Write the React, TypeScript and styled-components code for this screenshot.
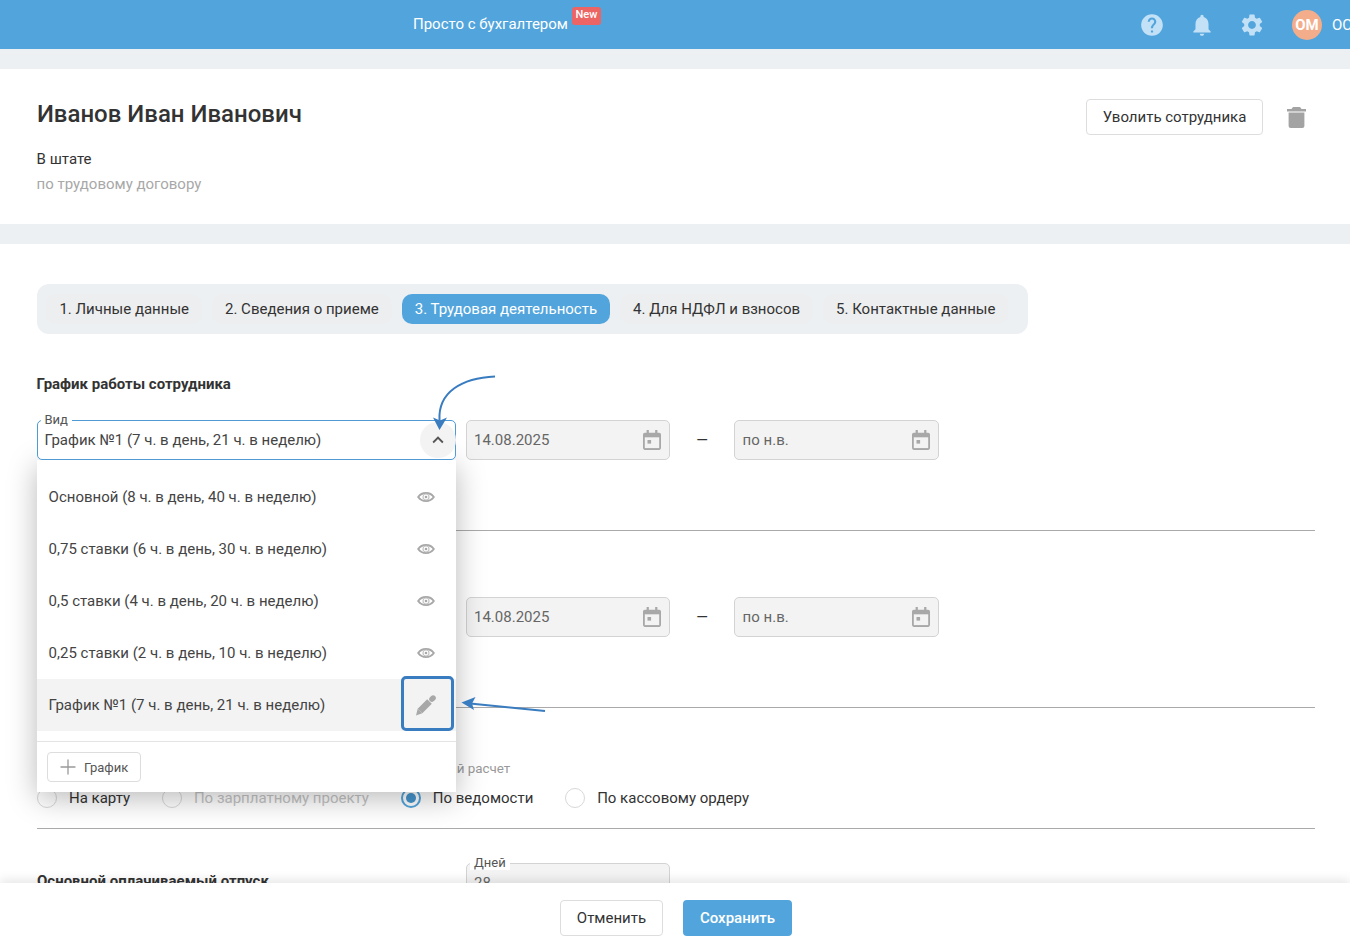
import styled, { createGlobalStyle } from 'styled-components';
import { MdHelp, MdKeyboardArrowUp, MdNotifications, MdSettings } from 'react-icons/md';
import { Plus } from 'lucide-react';

const GlobalStyle = createGlobalStyle`
  html, body {
    margin: 0;
    height: 100%;
    overflow: hidden;
    background: #fff;
    font-family: Roboto, "Noto Sans", sans-serif;
    font-size: 15px;
    color: #333;
  }
`;

const Header = styled.header`
  height: 49px;
  background: #52a5dc;
  display: flex;
  align-items: center;
  padding-left: 413px;
`;

const Product = styled.div`
  position: relative;
  margin-top: -2px;
  color: #fff;
  font-size: 15px;
`;

const NewBadge = styled.span`
  position: absolute;
  left: 159px;
  top: -8px;
  width: 29px;
  height: 18px;
  border-radius: 3px;
  background: #ec6464;
  color: #fff;
  font-size: 11px;
  font-weight: 500;
  line-height: 16px;
  text-align: center;
`;

const HeaderTools = styled.div`
  margin-left: auto;
  display: flex;
  align-items: center;
`;

const ToolIcon = styled.span`
  width: 50px;
  display: flex;
  justify-content: center;
  color: #c3e1f6;
  font-size: 26px;
`;

const Avatar = styled.div`
  width: 30px;
  height: 30px;
  margin-left: 15px;
  border-radius: 50%;
  background: #f4ad8a;
  color: #fff;
  font-size: 15px;
  font-weight: 700;
  line-height: 30px;
  text-align: center;
`;

const UserName = styled.div`
  width: 18px;
  margin-left: 10px;
  overflow: hidden;
  white-space: nowrap;
  color: #fff;
`;

const Band = styled.div`
  height: 20px;
  background: #ecf0f3;
`;

const EmployeeCard = styled.section`
  height: 155px;
  box-sizing: border-box;
  padding: 30px 44px 0 36.6px;
  display: flex;
  justify-content: space-between;
  align-items: flex-start;
`;

const EmployeeName = styled.h1`
  margin: 0 0 0 0.3px;
  font-size: 24px;
  font-weight: 500;
  line-height: 30px;
  color: #333;
`;

const EmployeeStatus = styled.div`
  margin-top: 20px;
  font-size: 15px;
  line-height: 20px;
`;

const EmployeeContract = styled.div`
  margin-top: 5px;
  font-size: 15px;
  line-height: 20px;
  color: #a8a8a8;
`;

const EmployeeActions = styled.div`
  display: flex;
  align-items: center;
  gap: 24px;
`;

const OutlineButton = styled.button<{ $width: number }>`
  width: ${(p) => p.$width}px;
  height: 36px;
  padding: 0;
  background: #fff;
  border: 1px solid #ddd;
  border-radius: 4px;
  color: #333;
  font: 15px Roboto, sans-serif;
`;

const Content = styled.main`
  padding: 40px 35px 0 37px;
`;

const Tabs = styled.nav`
  width: 991px;
  box-sizing: border-box;
  padding: 10px 0 10px 9.4px;
  display: flex;
  gap: 10px;
  background: #ecf0f3;
  border-radius: 12px;
`;

const Tab = styled.div<{ $active?: boolean }>`
  height: 30px;
  padding: 0 13px;
  border-radius: 10px;
  line-height: 30px;
  background: ${(p) => (p.$active ? '#52a5dc' : '#edeeef')};
  color: ${(p) => (p.$active ? '#fff' : '#333')};
`;

const SectionTitle = styled.h2`
  margin: 40px 0 26px -0.4px;
  font-size: 15px;
  font-weight: 700;
  line-height: 20px;
  color: #333;
`;

const FieldRow = styled.div<{ $top?: number }>`
  display: flex;
  align-items: center;
  margin-top: ${(p) => p.$top ?? 0}px;
`;

const SelectSlot = styled.div`
  position: relative;
  width: 419px;
  height: 40px;
  margin-right: 10px;
  flex: none;
`;

const SelectBox = styled.div`
  position: relative;
  z-index: 6;
  height: 100%;
  box-sizing: border-box;
  padding-left: 6.6px;
  display: flex;
  align-items: center;
  justify-content: space-between;
  background: #fff;
  border: 1px solid #4e9ad4;
  border-radius: 5px;
  color: #444;
`;

const FloatLabel = styled.span`
  position: absolute;
  z-index: 7;
  left: 3.5px;
  top: -7px;
  padding: 0 4px;
  background: #fff;
  color: #555;
  font-size: 13px;
  line-height: 14px;
`;

const ChevronButton = styled.span`
  width: 36px;
  height: 36px;
  margin-right: -1px;
  display: flex;
  align-items: center;
  justify-content: center;
  border-radius: 50%;
  background: #f3f3f3;
  color: #555;
  font-size: 22px;
`;

const DateField = styled.div<{ $width: number; $inset?: number }>`
  width: ${(p) => p.$width}px;
  height: 40px;
  box-sizing: border-box;
  padding: 0 8px 0 ${(p) => p.$inset ?? 7}px;
  display: flex;
  align-items: center;
  justify-content: space-between;
  flex: none;
  background: #f3f3f3;
  border: 1px solid #d3d3d3;
  border-radius: 5px;
  color: #666;
`;

const Dash = styled.div`
  width: 64px;
  margin-top: -1px;
  text-align: center;
  color: #333;
`;

const Dropdown = styled.div`
  position: absolute;
  z-index: 5;
  left: 0;
  top: 40px;
  width: 419px;
  height: 332px;
  box-sizing: border-box;
  padding-top: 11px;
  background: #fff;
  box-shadow: 0 6px 28px rgba(0, 0, 0, 0.28);
`;

const Option = styled.div<{ $selected?: boolean }>`
  height: 52px;
  padding: 0 ${(p) => (p.$selected ? 20 : 21)}px 0 11.6px;
  display: flex;
  align-items: center;
  justify-content: space-between;
  background: ${(p) => (p.$selected ? '#f3f3f3' : '#fff')};
  color: #444;
  font-size: 15px;
`;

const HighlightBox = styled.div`
  position: absolute;
  right: 2px;
  top: 216px;
  width: 53px;
  height: 55px;
  box-sizing: border-box;
  border: 3px solid #3a7cc0;
  border-radius: 5px;
`;

const DropdownFooter = styled.div`
  margin-top: 10px;
  padding: 10px;
  border-top: 1px solid #e3e3e3;
`;

const AddButton = styled.button`
  height: 30px;
  width: 94px;
  box-sizing: border-box;
  padding: 0 0 0 8px;
  display: flex;
  align-items: center;
  gap: 4px;
  background: #fff;
  border: 1px solid #ddd;
  border-radius: 4px;
  color: #555;
  font: 13px Roboto, sans-serif;
`;

const Divider = styled.hr<{ $top: number }>`
  height: 1px;
  margin: ${(p) => p.$top}px 0 0;
  border: 0;
  background: #aaa;
`;

const GroupLabel = styled.div`
  margin-top: 53px;
  padding-left: 3px;
  font-size: 13.4px;
  line-height: 16px;
  color: #999;
  white-space: nowrap;
`;

const RadioGroup = styled.div`
  margin-top: 11px;
  display: flex;
  gap: 31.85px;
`;

const RadioItem = styled.label<{ $disabled?: boolean }>`
  display: flex;
  align-items: center;
  gap: 12px;
  line-height: 20px;
  color: ${(p) => (p.$disabled ? '#c4c4c4' : '#333')};
`;

const RadioMark = styled.span<{ $checked?: boolean }>`
  width: 20px;
  height: 20px;
  box-sizing: border-box;
  display: flex;
  align-items: center;
  justify-content: center;
  border-radius: 50%;
  border: ${(p) => (p.$checked ? '2px solid #52a5dc' : '1px solid #d8d8d8')};

  &::after {
    content: '';
    width: 10px;
    height: 10px;
    border-radius: 50%;
    background: ${(p) => (p.$checked ? '#4596cf' : 'transparent')};
  }
`;

const VacationRow = styled.div`
  margin-top: 34px;
  display: flex;
  align-items: center;
`;

const VacationTitle = styled.div`
  width: 429px;
  flex: none;
  padding-bottom: 4px;
  font-size: 15px;
  font-weight: 700;
`;

const DaysField = styled(DateField)`
  position: relative;
`;

const DaysLabel = styled.span`
  position: absolute;
  left: 3px;
  top: -8px;
  padding: 0 4px;
  background: #fff;
  color: #555;
  font-size: 13px;
  line-height: 14px;
`;

const Footer = styled.footer`
  position: fixed;
  z-index: 10;
  left: 0;
  right: 0;
  bottom: 0;
  height: 58px;
  padding: 17px 0 0 2px;
  box-sizing: border-box;
  display: flex;
  justify-content: center;
  align-items: flex-start;
  gap: 20px;
  background: #fff;
  box-shadow: 0 -3px 10px rgba(0, 0, 0, 0.1);
`;

const PrimaryButton = styled.button`
  height: 36px;
  padding: 0 17px;
  background: #52a5dc;
  border: 0;
  border-radius: 4px;
  color: #fff;
  font: 500 15px Roboto, sans-serif;
`;

const Arrows = styled.svg`
  position: fixed;
  z-index: 20;
  left: 0;
  top: 0;
  overflow: visible;
`;

const CalendarIcon = () => (
  <svg width="18" height="20" viewBox="0 0 20 22" fill="none">
    <path d="M4 0h2.5v3h7V0H16v3h2a2 2 0 0 1 2 2v15a2 2 0 0 1-2 2H2a2 2 0 0 1-2-2V5a2 2 0 0 1 2-2h2z" fill="#a8a8a8" />
    <rect x="2" y="8" width="16" height="12" fill="#f3f3f3" />
    <rect x="5" y="11" width="4" height="4" fill="#a8a8a8" />
  </svg>
);

const TrashIcon = () => (
  <svg width="19" height="21" viewBox="0 0 19 21" fill="#a3a3a3">
    <path d="M6 0h7l1.5 2H19v2.6H0V2h4.5z" />
    <path d="M1.6 5.4h15.8V19a2 2 0 0 1-2 2H3.6a2 2 0 0 1-2-2z" />
  </svg>
);

const PencilIcon = () => (
  <svg width="24" height="24" viewBox="-1.5 -1 24 24" fill="none">
    <path d="M2.5 21.5l1.7-6.8 4.6 4.6z" fill="#a8a8a8" />
    <path d="M6.5 17L16 7.5" stroke="#a8a8a8" strokeWidth="6.5" />
    <path d="M18.4 5.2L19.6 4" stroke="#a8a8a8" strokeWidth="5.4" strokeLinecap="round" />
  </svg>
);

const EyeIcon = () => (
  <svg width="18" height="12" viewBox="0 0 18 12" fill="none">
    <path d="M1.2 6C4.8.6 13.2.6 16.8 6C13.2 11.4 4.8 11.4 1.2 6z" stroke="#a8a8a8" strokeWidth="1.9" />
    <circle cx="9" cy="6" r="3" stroke="#c4c4c4" strokeWidth="1.2" />
    <circle cx="9" cy="6" r="1.3" fill="#a8a8a8" />
  </svg>
);

const options = [
  'Основной (8 ч. в день, 40 ч. в неделю)',
  '0,75 ставки (6 ч. в день, 30 ч. в неделю)',
  '0,5 ставки (4 ч. в день, 20 ч. в неделю)',
  '0,25 ставки (2 ч. в день, 10 ч. в неделю)',
];

const tabs = ['1. Личные данные', '2. Сведения о приеме', '3. Трудовая деятельность', '4. Для НДФЛ и взносов', '5. Контактные данные'];

const DateRange = () => (
  <>
    <DateField $width={204}>
      14.08.2025
      <CalendarIcon />
    </DateField>
    <Dash>—</Dash>
    <DateField $width={205} $inset={7.6}>
      по н.в.
      <CalendarIcon />
    </DateField>
  </>
);

export default function App() {
  return (
    <>
      <GlobalStyle />
      <Header>
        <Product>
          Просто с бухгалтером
          <NewBadge>New</NewBadge>
        </Product>
        <HeaderTools>
          <ToolIcon><MdHelp /></ToolIcon>
          <ToolIcon><MdNotifications /></ToolIcon>
          <ToolIcon><MdSettings /></ToolIcon>
          <Avatar>ОМ</Avatar>
          <UserName>ОС</UserName>
        </HeaderTools>
      </Header>
      <Band />
      <EmployeeCard>
        <div>
          <EmployeeName>Иванов Иван Иванович</EmployeeName>
          <EmployeeStatus>В штате</EmployeeStatus>
          <EmployeeContract>по трудовому договору</EmployeeContract>
        </div>
        <EmployeeActions>
          <OutlineButton $width={177}>Уволить сотрудника</OutlineButton>
          <TrashIcon />
        </EmployeeActions>
      </EmployeeCard>
      <Band />
      <Content>
        <Tabs>
          {tabs.map((tab, i) => (
            <Tab key={tab} $active={i === 2}>{tab}</Tab>
          ))}
        </Tabs>

        <SectionTitle>График работы сотрудника</SectionTitle>
        <FieldRow>
          <SelectSlot>
            <SelectBox>
              График №1 (7 ч. в день, 21 ч. в неделю)
              <ChevronButton><MdKeyboardArrowUp /></ChevronButton>
            </SelectBox>
            <FloatLabel>Вид</FloatLabel>
            <Dropdown>
              {options.map((option) => (
                <Option key={option}>
                  {option}
                  <EyeIcon />
                </Option>
              ))}
              <Option $selected>
                График №1 (7 ч. в день, 21 ч. в неделю)
                <PencilIcon />
              </Option>
              <HighlightBox />
              <DropdownFooter>
                <AddButton>
                  <Plus size={24} strokeWidth={1.3} color="#999" />
                  График
                </AddButton>
              </DropdownFooter>
            </Dropdown>
          </SelectSlot>
          <DateRange />
        </FieldRow>
        <Divider $top={70} />

        <FieldRow $top={66}>
          <SelectSlot />
          <DateRange />
        </FieldRow>
        <Divider $top={70} />

        <GroupLabel>Способ начисления зарплаты, аванса, отпускных и окончательный расчет</GroupLabel>
        <RadioGroup>
          <RadioItem><RadioMark />На карту</RadioItem>
          <RadioItem $disabled><RadioMark />По зарплатному проекту</RadioItem>
          <RadioItem><RadioMark $checked />По ведомости</RadioItem>
          <RadioItem><RadioMark />По кассовому ордеру</RadioItem>
        </RadioGroup>
        <Divider $top={20} />

        <VacationRow>
          <VacationTitle>Основной оплачиваемый отпуск</VacationTitle>
          <DaysField $width={204}>
            28
            <DaysLabel>Дней</DaysLabel>
          </DaysField>
        </VacationRow>
      </Content>

      <Arrows width="1" height="1">
        <path d="M495 376.5C462 378 438 392 439.5 420" fill="none" stroke="#3a7cc0" strokeWidth="2" />
        <path d="M433 417.5L439.5 430L447 417.5L440 420.5z" fill="#3a7cc0" />
        <path d="M545 711L470 703.5" fill="none" stroke="#3a7cc0" strokeWidth="2" />
        <path d="M461.5 702.5L475.5 697L472 703.5L474 710z" fill="#3a7cc0" />
      </Arrows>

      <Footer>
        <OutlineButton $width={103}>Отменить</OutlineButton>
        <PrimaryButton>Сохранить</PrimaryButton>
      </Footer>
    </>
  );
}
